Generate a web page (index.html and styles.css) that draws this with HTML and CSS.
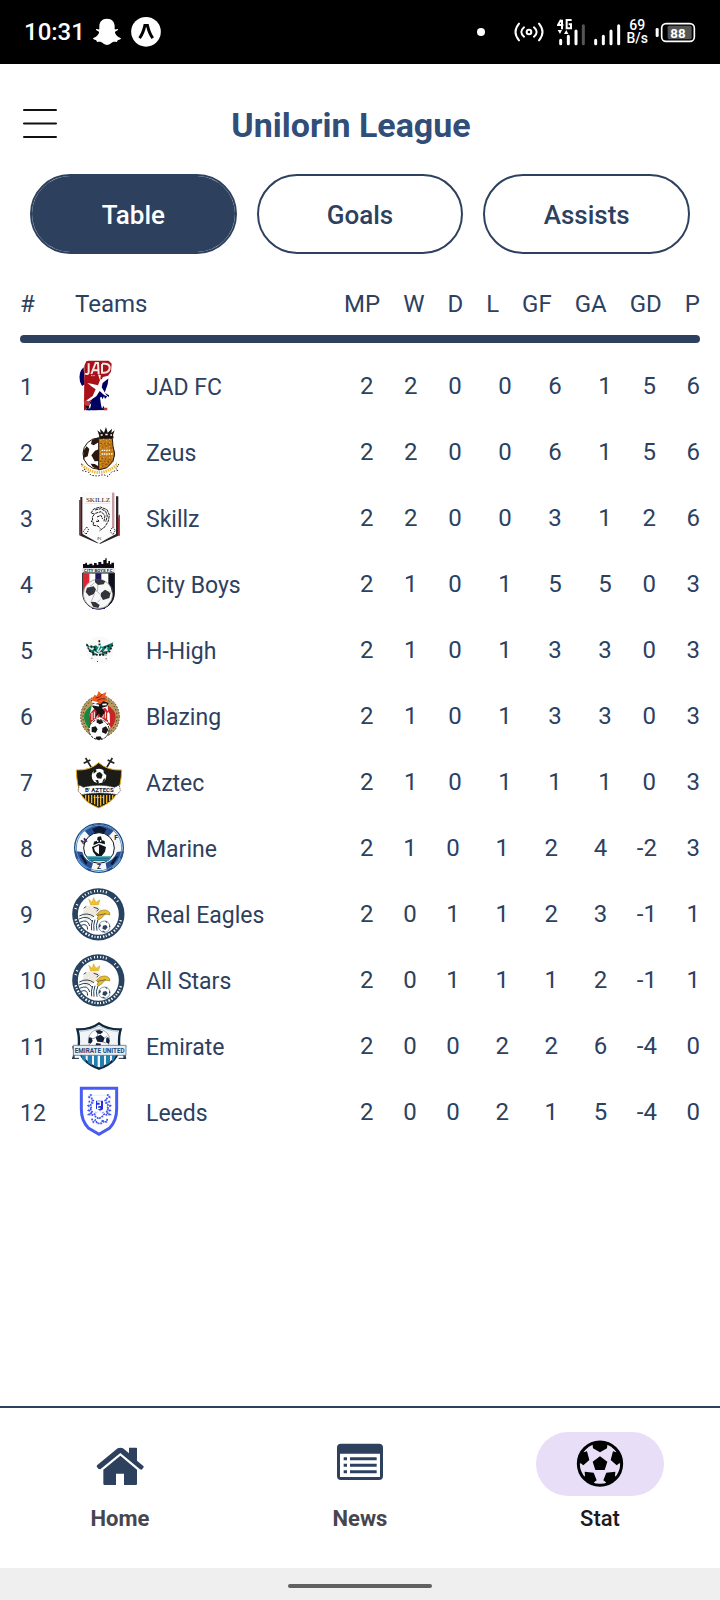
FILE: index.html
```html
<!DOCTYPE html>
<html lang="en">
<head>
<meta charset="utf-8">
<meta name="viewport" content="width=device-width, initial-scale=1">
<title>Unilorin League</title>
<link rel="stylesheet" href="styles.css">
</head>
<body>
<div class="status">
  <span class="status-time">10:31</span>
  <svg class="ghost" viewBox="276 55 84 84" width="28" height="28" aria-hidden="true"><path fill="#fff" d="M318 57c-15 0-23 10-23 23v9c-3 1-8-2-10 0-1 3 7 5 9 8 1 5-7 15-17 18-2 2 0 4 8 6 2 1 1 5 4 6 3 0 7-1 11 0 6 2 9 9 18 9s12-7 18-9c4-1 8 0 11 0 3-1 2-5 4-6 8-2 10-4 8-6-10-3-18-13-17-18 2-3 10-5 9-8-2-2-7 1-10 0v-9c0-13-8-23-23-23z"/></svg>
  <svg class="expo" viewBox="392 51 91 91" width="30" height="30" aria-hidden="true"><circle cx="437.500" cy="96" r="45" fill="#fff"/><path d="M418 115C427 103 431 90 434 77H442C445 90 449 103 458 115" fill="none" stroke="#000" stroke-width="9"/></svg>
  <div class="status-right">
    <svg class="dot" viewBox="0 0 8 8" width="8" height="8" aria-hidden="true"><circle cx="4" cy="4" r="4" fill="#fff"/></svg>
    <svg class="hotspot" viewBox="465 51 90 90" width="30" height="30" aria-hidden="true"><g fill="none" stroke="#fff" stroke-width="6" stroke-linecap="round"><circle cx="510" cy="96" r="7"/><path d="M495 82q-16 14 0 28M525 82q16 14 0 28M480 71q-21 25 0 50M540 71q21 25 0 50"/></g></svg>
    <svg class="signal-data" viewBox="594 48 87 84" width="29" height="28" aria-hidden="true"><g fill="none" stroke="#fff" stroke-width="6"><path d="M606 53L597 69H613M609 53V82M638 54H623V79H636V67H629"/></g><path fill="#fff" d="M596 84h13l-6 12zM615 96h13l-6-12z"/><g stroke="#fff" stroke-width="9" stroke-linecap="round"><path d="M605 115v10M628 103v22M651 87v38"/><path stroke="#555" d="M673 71v54"/></g></svg>
    <svg class="signal" viewBox="702 48 81 84" width="27" height="28" aria-hidden="true"><path stroke="#fff" stroke-width="9" stroke-linecap="round" d="M707 115v10M730 103v22M753 87v38M776 71v54"/></svg>
    <span class="speed">69<br>B/s</span>
    <svg class="battery" viewBox="885 63 123 63" width="41" height="21" aria-label="Battery 88"><rect x="905" y="68" width="98" height="53" rx="13" fill="none" stroke="#fff" stroke-width="5"/><rect x="923" y="74" width="72" height="41" rx="5" fill="#555"/><rect x="887" y="81" width="9" height="27" rx="4" fill="#fff"/><text class="battery-text" x="954" y="110" text-anchor="middle">88</text></svg>
  </div>
</div>

<header class="header">
  <button class="menu" type="button" aria-label="Open menu"><svg viewBox="0 0 36 32" width="36" height="32"><path d="M2 3h32M2 16.500h32M2 30h32" stroke="#111" stroke-width="2" stroke-linecap="round"/></svg></button>
  <h1 class="title">Unilorin League</h1>
</header>

<div class="tabs">
  <button class="tab tab-active" type="button" aria-pressed="true">Table</button>
  <button class="tab" type="button" aria-pressed="false">Goals</button>
  <button class="tab" type="button" aria-pressed="false">Assists</button>
</div>

<main class="main">
<table class="league">
<thead>
<tr class="head-row"><th class="rank">#</th><th class="teams">Teams</th><th class="mp">MP</th><th>W</th><th>D</th><th>L</th><th>GF</th><th>GA</th><th>GD</th><th>P</th></tr>
</thead>
<tbody>
<tr class="row"><td class="rank">1</td><td class="team">
<svg class="crest" viewBox="213 27 168 162" aria-hidden="true"><path fill="#000063" d="M251 52q-17 14-11 43l6 13 8-5zM257 181l23-42 22-39 24-21-3 24-9 25 13 8v44z"/><path fill="#aa1018" d="M259 34l7-2h60l9 9-2 24-9 12-15 4-31 61-22 39h-4l1-134z"/><path fill="#fff" d="M294 73l8 2-1 14 20-8 23-11-4 6-20 13-12 10-3 13 9 15 8 12-9-3-14-13-10 16-25 16-6-3 20-14 9-20-11-8-14-11 16 3 16 4 6-15zM300 143l5-3 2 8 5-9 3 8 8-10 5 6v38h-14l-3-14-5 9-3-12z"/><path fill="#fff" d="M262 169l12-9-5 21z"/><path fill="#111" d="M257 169l3-8 3 6 5-2-1 8-7 3zM265 181l3-9 3 9zM278 181l3-12 2 12zM286 181l2-9 2 9z"/><path fill="#c23b43" d="M251 154l8-3 9 5 3 8-8 4-8-3zM311 173h11v8h-11z"/><path d="M255 71q11 4 11-6V40M274 72l13-33h7l2 33M278 61h17M306 42v26h6q17-1 17-15 0-12-16-12h-7" fill="none" stroke="#efe9e7" stroke-width="6"/><path d="M273 77h12" stroke="#ddd" stroke-width="3" stroke-dasharray="3 2" fill="none"/></svg>
<span class="name">JAD FC</span></td><td>2</td><td>2</td><td>0</td><td class="wide">0</td><td class="wide">6</td><td class="wide">1</td><td>5</td><td>6</td></tr>
<tr class="row"><td class="rank">2</td><td class="team">
<svg class="crest" viewBox="213 225 168 162" aria-hidden="true"><circle cx="296" cy="311" r="47" fill="#fff" stroke="#241611" stroke-width="3"/><path fill="#2b1710" d="M276 269l20-7v15l-15 9-8-4zM250 303l10-14 8 8-5 22-12 5zM274 316l11-14 13-5v36l-14 1zM272 341l12 1 14 8v9l-20-8zM249 313l5 19-4-5z"/><path fill="#c17a19" stroke="#241611" stroke-width="3" d="M296 265h41l2 24 5 23-5 22-18 19-25 7z"/><path stroke="#f1ab31" stroke-width="3" stroke-dasharray="4 7" d="M302 270v84M311 266v86M320 270v79M329 266v76M337 298v30"/><path stroke="#6b3912" stroke-width="2" stroke-dasharray="6 5" fill="none" d="M300 281h34M306 292l24-8 5 17M304 325l27 4-8 14-20-2M299 334h40M306 350l20-12"/><path stroke="#fff" stroke-width="4" stroke-dasharray="4 3" d="M305 301h28M305 312h34"/><path fill="#1b1010" d="M292 241l10 8-2-13 12 12 6-17 5 17 13-12-2 13 10-8-5 14 2 10H298l-1-10z"/><path fill="#fff" d="M302 253h6v4h-6zM316 251h7v5h-7zM331 253h5v4h-5z"/><path d="M246 345q50 45 105-1" fill="none" stroke="#efb43a" stroke-width="9" stroke-dasharray="4 3"/><path d="M243 342l7 2M255 357l-8 5 18 4 8 10 20 2 17-4 14 5 12-14 18-4-7-6 10-10-8-6" fill="none" stroke="#221914" stroke-width="3" stroke-dasharray="4 5"/></svg>
<span class="name">Zeus</span></td><td>2</td><td>2</td><td>0</td><td class="wide">0</td><td class="wide">6</td><td class="wide">1</td><td>5</td><td>6</td></tr>
<tr class="row"><td class="rank">3</td><td class="team">
<svg class="crest" viewBox="213 423 168 162" aria-hidden="true"><path fill="#d82d37" d="M237 450h5v109l-5-4zM355 497l5-4v64h-10z"/><path fill="#2b2629" d="M241 441h7v111l49 27-5 1-51-23zM348 439h7v118l-55 25-3-3 51-27z"/><path fill="#fbfcfb" stroke="#eee" d="M248 428h96v122l-46 30-50-30z"/><path fill="#c99ba3" d="M336 428h7v103h-7z"/><text class="crest-serif" x="294" y="456" text-anchor="middle">SKILLZ</text><path d="M254 460h78" stroke="#bbb" stroke-width="1"/><path fill="none" stroke="#1d1d1d" stroke-width="3" stroke-dasharray="9 2" d="M273 489l8-12 20-6 20 8 7 16-3 18-10 17-17 13M275 490l9 2-7 9 1 10-5 3 8 3-2 9 15 2 7 8M285 480l17-4 15 8 5 14-5 18M286 490l17-5 12 11-3 18M291 501l12-5 5 11M288 514h10l-5-5"/><path fill="none" stroke="#222" stroke-width="3" stroke-dasharray="4 3" d="M260 531l6 9-8 13-8-9zM338 531l8 10-7 13-9-10z"/><path stroke="#444" stroke-width="2" fill="none" d="M294 562v8M294 563h4M303 570l-3-5 3-3"/></svg>
<span class="name">Skillz</span></td><td>2</td><td>2</td><td>0</td><td class="wide">0</td><td class="wide">3</td><td class="wide">1</td><td>2</td><td>6</td></tr>
<tr class="row"><td class="rank">4</td><td class="team">
<svg class="crest" viewBox="213 21 168 162" aria-hidden="true"><path fill="#09090f" d="M249 54V42h7v-4h5v6h7v-3h9v5h5v-7h8v5h5v-8h9v6h6V30h6v-5h4v15h5v-7h5v10h4v-5h8v16z"/><path fill="#fff" stroke="#777" d="M249 55h93v13h-93z"/><text class="crest-mini" x="295" y="67" text-anchor="middle">CITY BOYS F.C</text><path fill="#fff" stroke="#11131d" stroke-width="3" d="M248 69h95v60q0 24-19 39-28 20-57 0-19-15-19-39z"/><path fill="#dc2530" d="M249 70h19v94q-19-15-19-39z"/><path fill="#22165f" d="M286 70h18v20h-18zM276 172h39v5h-39z"/><path fill="#0d101e" d="M325 70h18v60q0 24-18 38z"/><circle cx="294" cy="132" r="44" fill="#f7f7f7" stroke="#888" stroke-width="2"/><g fill="#33333a"><path d="M285 88l15-1 16 7-5 9-17 2-9-8zM261 113l20-4 7 9-6 14-15 6-10-12zM303 129l12-10 17 9-4 16-19 6-7-12zM272 155l14 1 13 9-4 9-16-4zM331 105l7 9 2 18-5-8z"/></g><path fill="none" stroke="#b9bbc1" stroke-width="3" d="M283 99l-13 10M293 105v16l-7 3M288 121l15 14M283 132l-10 25M301 148l-9 9M327 128l9-5"/></svg>
<span class="name">City Boys</span></td><td>2</td><td>1</td><td>0</td><td class="wide">1</td><td class="wide">5</td><td class="wide">5</td><td>0</td><td>3</td></tr>
<tr class="row"><td class="rank">5</td><td class="team">
<svg class="crest" viewBox="213 219 168 162" aria-hidden="true"><circle cx="299" cy="300" r="40" fill="#fafafa" stroke="#e4e4e4" stroke-dasharray="3 6"/><path fill="#0b7d6c" d="M258 279l13 12 17-5 7 6 5-13 5 12 16-6 19-8-7 20-9 8-15 11-12-5-13 5-17-14z"/><path fill="none" stroke="#101918" stroke-width="5" stroke-dasharray="6 4" d="M260 283l9 20 13 7M338 284l-9 20-14 7M271 288l19 6M328 288l-19 6M277 314l42 1M298 271v15M283 296l7 11 10-5 11 7 9-16"/><path fill="none" stroke="#e4f2ee" stroke-width="4" d="M266 292l10 6 5-5M301 285l-9 18 6 1 8-10M322 292l-8 10 9-2M282 305l9 5 16-2"/><path fill="#345" d="M274 323h3v3h-3zM291 333h3v3h-3zM317 325h3v3h-3z"/></svg>
<span class="name">H-High</span></td><td>2</td><td>1</td><td>0</td><td class="wide">1</td><td class="wide">3</td><td class="wide">3</td><td>0</td><td>3</td></tr>
<tr class="row"><td class="rank">6</td><td class="team">
<svg class="crest" viewBox="213 417 168 162" aria-hidden="true"><ellipse cx="300" cy="500" rx="58" ry="62" fill="#b99b61" stroke="#51442a" stroke-dasharray="5 4" stroke-width="3"/><ellipse cx="300" cy="500" rx="51" ry="55" fill="none" stroke="#33291f" stroke-width="3" stroke-dasharray="4 7"/><ellipse cx="300" cy="502" rx="44" ry="42" fill="#fff"/><path fill="#158741" d="M276 465q-42 28-10 69l8-9-5-31z"/><path fill="#c82526" d="M323 465q42 28 11 69l-10-13V480zM284 475l-15 17 1 27 14-11 17-8 15 12 14 8-1-29-13-18-16 8z"/><path stroke="#fff" stroke-width="3" fill="none" d="M276 488v22M283 485v20M291 489v16M309 489v14M316 485v20M323 488v22"/><path fill="#171314" d="M279 455l21-6 26 10-5 10-15 4 9 14-13 17-5-14-11 13 4-19-13-14z"/><path fill="#f15a20" d="M277 446l7-12 6 4 6-15 9 10 14-7-3 11 8 4-9 4 7 7-12 2-9 8-19-3-6-5z"/><path stroke="#702516" stroke-width="3" fill="none" d="M287 444l12-3 8-9M292 451l13-5 11 1"/><path stroke="#fff" stroke-width="5" fill="none" d="M276 455l13 3-8 6 16 3M307 464l13-1"/><circle cx="297" cy="539" r="30" fill="#fff" stroke="#222" stroke-width="3" stroke-dasharray="8 3"/><path fill="#171717" d="M292 510l14 1 4 7-11 5-10-6zM275 532l12-3 6 9-6 10-12-2zM307 534l11-5 7 10-7 13-12-5zM288 560l13-1 5 7-9 4-10-4z"/></svg>
<span class="name">Blazing</span></td><td>2</td><td>1</td><td>0</td><td class="wide">1</td><td class="wide">3</td><td class="wide">3</td><td>0</td><td>3</td></tr>
<tr class="row"><td class="rank">7</td><td class="team">
<svg class="crest" viewBox="213 15 168 162" aria-hidden="true"><path stroke="#222" stroke-width="5" fill="none" d="M257 24l17 29M251 40l20-10M337 24l-17 29M343 40l-20-10"/><path fill="#1b1b18" stroke="#e7a719" stroke-width="3" d="M229 60q41 2 67-22 27 24 69 22-1 46-16 73-14 25-53 41-40-16-53-41-13-27-14-73z"/><path stroke="#edb528" stroke-width="4" d="M257 135v15M266 135v20M275 135v24M284 135v28M293 135v34M302 135v32M311 135v27M320 135v24M329 135v18M338 135v11"/><circle cx="297" cy="78" r="22" fill="#fff"/><path fill="#1a1a1a" d="M291 69l9-3 8 8-4 12-12-1-4-8zM280 62l7-5 3 7-9 7zM311 59l8 8-2 8-6-7zM286 91l8-1 3 8-5 2zM311 87l5-2-4 10-5 1z"/><path fill="#fff" stroke="#333" stroke-width="2" stroke-dasharray="5 2" d="M238 105l12 7q46-12 94 0l14-7 3 17-10 12q-50-10-106 0l-11-11z"/><text class="crest-bold aztecs" x="298" y="126" text-anchor="middle">B' AZTECS</text><path stroke="#fff" stroke-width="3" stroke-dasharray="3 3" d="M281 142h31"/></svg>
<span class="name">Aztec</span></td><td>2</td><td>1</td><td>0</td><td class="wide">1</td><td class="wide">1</td><td class="wide">1</td><td>0</td><td>3</td></tr>
<tr class="row"><td class="rank">8</td><td class="team">
<svg class="crest" viewBox="213 213 168 162" aria-hidden="true"><circle cx="297" cy="294" r="73" fill="#f5f7fb" stroke="#174b88" stroke-width="4"/><path fill="#284d91" d="M252 240q45-36 91 0l-20 22q-27-14-52 0zM224 303q2 42 48 60l7-24q-26-9-32-33zM371 303q-4 45-50 61l-4-25q25-10 34-33z"/><path fill="#0d1933" d="M276 237l22-9 22 9-9 15h-24zM240 316l6-2 16 24-4 7zM331 341l14-20 10-3-17 28z"/><path stroke="#5595d2" stroke-width="5" fill="none" d="M239 254q15-18 34-24M233 326q10 21 29 29M337 353q18-11 24-28"/><circle cx="297" cy="294" r="68" fill="none" stroke="#6293bd" stroke-width="3"/><circle cx="297" cy="294" r="46" fill="#fff" stroke="#11151b" stroke-width="3"/><path fill="#2c96ad" d="M259 319h76l-10 15h-57z"/><path stroke="#145a78" stroke-width="2" d="M266 325h63M270 331h52"/><path fill="#11151b" d="M293 261l10-2 3 12 8 2 1 10-18-5-17 8 2-11 9-3zM276 291l21-9 21 9-3 14-10 13h-16l-10-13z"/><path fill="#fff" d="M297 286l-15 7 3 11 12 9zM291 271h4v5h-4zM300 270h4v5h-4z"/><text class="crest-bold marine" transform="translate(249 284) rotate(-36)">M</text><text class="crest-bold marine" x="343" y="271">F</text><text class="crest-bold marine" x="291" y="358">Z</text></svg>
<span class="name">Marine</span></td><td>2</td><td>1</td><td>0</td><td class="wide">1</td><td class="wide">2</td><td class="wide">4</td><td>-2</td><td>3</td></tr>
<tr class="row"><td class="rank">9</td><td class="team">
<svg class="crest" viewBox="213 411 168 162" aria-hidden="true"><defs><g id="eagle"><circle cx="295" cy="493" r="70" fill="#fff" stroke="#28435f" stroke-width="17"/><path d="M225 493a70 70 0 0 1 140 0" fill="none" stroke="#fff" stroke-width="7" stroke-dasharray="0 16 3 9 3 27 3 6 3 7 3 5 3 8 3 6 3 7 3 5 3 6 3 28 3 9 3 60"/><path d="M227 508a70 70 0 0 0 136 0" fill="none" stroke="#fff" stroke-width="7" stroke-dasharray="4 5 3 5 5 4 3 6 4 4 3 6 5 5 4 6"/><path fill="#efc22e" stroke="#b78d25" d="M266 447l10 10 5-14 7 14 12-8-4 15-24 2z"/><path fill="#efe9de" d="M247 493q5-28 33-27 17 0 24 15l-9 10-14 10-24 12z"/><path fill="none" stroke="#28435f" stroke-width="3" d="M238 498q24-13 44 2M237 507q27-13 40 8M239 517q25-12 30 11M243 526q20-8 20 13M278 510q-6 15-3 31M285 509q-6 17-3 33M294 509q-8 17-3 33M251 475l8-6M296 478l-6 5M281 472l13 4"/><path fill="#edbd27" stroke="#8f761c" stroke-width="2" d="M289 494l12-11q18-8 28 5v7q-16-7-22 7l-10 7-6-3 4-8z"/><path stroke="#28435f" stroke-width="2" d="M292 496l25-5"/><circle cx="313" cy="530" r="17" fill="#fff" stroke="#596f82" stroke-width="2"/><path fill="#28435f" d="M309 527l9-2 5 7-7 8-9-4zM298 522l5 2-2 6-5 3zM327 522l4 8-4 1zM315 512l7 3-3 4zM304 543l8-1 4 6z"/></g></defs><use href="#eagle"/></svg>
<span class="name">Real Eagles</span></td><td>2</td><td>0</td><td>1</td><td class="wide">1</td><td class="wide">2</td><td class="wide">3</td><td>-1</td><td>1</td></tr>
<tr class="row"><td class="rank">10</td><td class="team">
<svg class="crest" viewBox="213 411 168 162" aria-hidden="true"><use href="#eagle"/></svg>
<span class="name">All Stars</span></td><td>2</td><td>0</td><td>1</td><td class="wide">1</td><td class="wide">1</td><td class="wide">2</td><td>-1</td><td>1</td></tr>
<tr class="row"><td class="rank">11</td><td class="team">
<svg class="crest" viewBox="213 207 168 162" aria-hidden="true"><path fill="#f2f5f8" stroke="#10283e" stroke-width="7" d="M232 238q40 1 65-18 25 19 65 18-7 22-4 51-3 47-61 67-57-21-61-67 3-29-4-51z"/><path fill="none" stroke="#8ba7bd" stroke-width="2" d="M240 244q34-2 57-16 24 14 57 16"/><path fill="#247eb0" d="M244 316h13v21l-10-9zM263 316h13v30l-13-8zM282 316h11v35l-11-4zM300 316h12v32l-12 5zM318 316h12v22l-12 7zM336 316h12l-8 17-4 2z"/><circle cx="297" cy="270" r="32" fill="#fff" stroke="#7d8792" stroke-width="2"/><path fill="#12203a" d="M286 242l12-2 12 5-8 7-9-1zM286 261l16-7 12 10-5 13-17-2zM267 262l8 1 3 10-6 8-7-3zM319 263l6-1 4 10-3 10-8-5zM289 279l14 2-2 7h-15z"/><path fill="none" stroke="#596473" stroke-width="2" d="M293 251v8M285 264l-9 2M309 276l9 3M314 264l7-7"/><path fill="#31465d" d="M216 289h8v37h-8l5-18zM370 289h9l-4 18 4 19h-9z"/><path fill="#e9edf2" stroke="#41566b" stroke-width="2" d="M220 286h158v30H220z"/><path stroke="#172a3c" stroke-width="3" d="M216 325h21M356 325h22"/><text class="crest-bold emirate" x="299" y="308" text-anchor="middle">EMIRATE UNITED</text></svg>
<span class="name">Emirate</span></td><td>2</td><td>0</td><td>0</td><td class="wide">2</td><td class="wide">2</td><td class="wide">6</td><td>-4</td><td>0</td></tr>
<tr class="row"><td class="rank">12</td><td class="team">
<svg class="crest" viewBox="213 405 168 162" aria-hidden="true"><path fill="#fff" stroke="#485cf2" stroke-width="9" d="M244 415h106v62q0 35-21 57l-32 19-32-19q-21-22-21-57z"/><path stroke="#bcc3ff" stroke-width="1" fill="none" d="M265 436h66v50H265z"/><path fill="#222de2" d="M288 452h21v26l-8 4-13-6z"/><path stroke="#fff" stroke-width="4" fill="none" d="M291 456h10v10h-8v11l8-3"/><g fill="none" stroke="#4355ef" stroke-width="6" stroke-dasharray="5 3"><path d="M274 433l-6 8 11 7-2 10-11-4M280 449l-4 14-10 4 10 8-9 6 11 5-10 7 14 2 6-8M322 433l6 8-12 7 4 10 10-4M315 449l5 14 10 4-10 8 9 6-11 5 10 7-14 2-6-8"/></g><path d="M275 506l5 10 6-6 6 10h12l4-10 4 6 8-1 2-9M284 498l12 8 14-8" fill="none" stroke="#4355ef" stroke-width="5" stroke-dasharray="6 2"/></svg>
<span class="name">Leeds</span></td><td>2</td><td>0</td><td>0</td><td class="wide">2</td><td class="wide">1</td><td class="wide">5</td><td>-4</td><td>0</td></tr>
</tbody>
</table>
</main>

<nav class="nav">
  <a class="nav-item" href="#home"><span class="nav-pill"><svg viewBox="288 150 144 144" width="48" height="48" aria-hidden="true"><path fill="#2d415f" d="M387 173h22q2 0 2 2v37l19 16q2 2 1 4l-6 7-5-1-59-49-60 49-5-1-6-7q0-3 2-5l61-50q8-4 16 0l18 15zM361 197l50 42v43q0 3-4 3h-35v-34h-24v34h-34q-4 0-4-4v-42z"/></svg></span><span class="nav-label">Home</span></a>
  <a class="nav-item" href="#news"><span class="nav-pill"><svg viewBox="1008 150 144 144" width="48" height="48" aria-hidden="true"><path fill="#2d415f" fill-rule="evenodd" d="M1023 161h114q12 0 12 12v85q0 12-12 12h-114q-12 0-12-12v-85q0-12 12-12zM1020 191v70h120v-70z"/><path stroke="#2d415f" stroke-width="9" d="M1031 206h10M1031 226h10M1031 245h10M1050 206h80M1050 226h80M1050 245h80"/></svg></span><span class="nav-label">News</span></a>
  <a class="nav-item nav-active" href="#stat" aria-current="page"><span class="nav-pill"><svg viewBox="468 150 144 144" width="48" height="48" aria-hidden="true"><circle cx="540" cy="221" r="65" fill="none" stroke="#000" stroke-width="9"/><path d="M540 199l22 16-8 25h-28l-8-25zM518 166l-2-9h48l-2 9 -1 9-21 12-21-12zM501 184l7 26-18 16-8-6-9 2q0-22 12-41l6 6zM579 184l-7 26 18 16 8-6 9 2q0-22-12-41l-6 6zM494 245l27 3 9 23-8 6 3 7q-20-5-36-22l6-3zM586 245l-27 3-9 23 8 6-3 7q20-5 36-22l-6-3z"/></svg></span><span class="nav-label">Stat</span></a>
</nav>
<div class="gesture"><div class="gesture-bar"></div></div>
</body>
</html>
```
FILE: styles.css
```css
* { box-sizing: border-box; }

body {
  margin: 0;
  min-height: 100vh;
  display: flex;
  flex-direction: column;
  background: #fff;
  color: #2d415f;
  font-family: Roboto, "Liberation Sans", sans-serif;
}

button { font: inherit; cursor: pointer; }
svg { display: block; flex: none; }

.status {
  display: flex;
  align-items: center;
  height: 64px;
  padding: 0 24px;
  background: #000;
  color: #fff;
}
.status-time { font-size: 24px; font-weight: 500; }
.ghost { margin-left: 8px; }
.expo { margin-left: 10px; }
.status-right { display: flex; align-items: center; margin-left: auto; }
.hotspot { margin-left: 29px; }
.signal-data { margin-left: 13px; }
.signal { margin-left: 8px; }
.speed { margin-left: 5px; font-size: 14px; line-height: 13px; font-weight: 500; text-align: center; }
.battery { margin-left: 7px; }
.battery-text { font: 700 40px Roboto, sans-serif; fill: #fff; }

.header {
  display: grid;
  grid-template-columns: 36px 1fr 56px;
  align-items: center;
  height: 110px;
  padding: 12px 20px 0 22px;
}
.menu { padding: 0 0 4px; border: 0; background: none; }
.title {
  margin: 0;
  color: #304e78;
  font-size: 34px;
  line-height: 40px;
  font-weight: 700;
  text-align: center;
}

.tabs { display: flex; gap: 20px; padding: 0 30px; }
.tab {
  flex: 1;
  height: 80px;
  padding: 2px 0 0;
  border: 2px solid #2d415f;
  border-radius: 40px;
  background: #fff;
  color: #2d415f;
  font-size: 26px;
  font-weight: 500;
}
.tab-active { background: #2d415f; background-clip: padding-box; color: #fff; }

.main { flex: 1; padding: 24px 20px; }
.league, .league thead, .league tbody { display: block; }
.league tr { display: flex; align-items: center; }
.league th, .league td { padding: 0; font-weight: 400; text-align: left; }
.league thead::after {
  content: "";
  display: block;
  height: 8px;
  margin-top: 5px;
  border-radius: 4px;
  background: #2d415f;
}
.league .head-row { height: 52px; gap: 23px; font-size: 24px; }
.head-row .rank { width: 32px; }
.head-row .mp { margin-left: auto; }
.league tbody { padding-top: 10px; }
.row { height: 66px; font-size: 24px; }
.league .row .rank { flex: 0 0 51px; padding-top: 2px; font-size: 23px; }
.row .team {
  flex: 0 0 calc(50% - 51px);
  display: flex;
  align-items: center;
  gap: 19px;
  font-size: 23px;
}
.name { padding-top: 2px; }
.row td + td + td + td { margin-left: auto; }
.league .row .wide { padding-left: 6px; }
.crest { width: 56px; height: 54px; }
.crest-serif { font: 400 21px "Liberation Serif", serif; fill: #222; }
.crest-mini { font: 700 13px Roboto, sans-serif; fill: #222; }
.crest-bold { font-family: Roboto, sans-serif; font-weight: 700; fill: #16202d; }
.aztecs { font-size: 18px; }
.marine { font-size: 20px; }
.emirate { font-size: 19px; fill: #17497a; }

.nav {
  display: flex;
  padding: 24px 0 35px;
  border-top: 2px solid #2d415f;
}
.nav-item {
  flex: 1;
  display: flex;
  flex-direction: column;
  align-items: center;
  gap: 9px;
  color: #47464f;
  text-decoration: none;
}
.nav-pill {
  display: flex;
  align-items: center;
  justify-content: center;
  width: 128px;
  height: 64px;
  border-radius: 32px;
}
.nav-label { font-size: 22px; line-height: 28px; font-weight: 700; }
.nav-active { color: #1b1b1f; }
.nav-active .nav-pill { background: #e8def8; }
.nav-active .nav-label { font-weight: 500; }

.gesture {
  display: flex;
  align-items: center;
  justify-content: center;
  height: 32px;
  padding-top: 4px;
  background: #efefef;
}
.gesture-bar { width: 20%; height: 4px; border-radius: 2px; background: #606060; }
```
